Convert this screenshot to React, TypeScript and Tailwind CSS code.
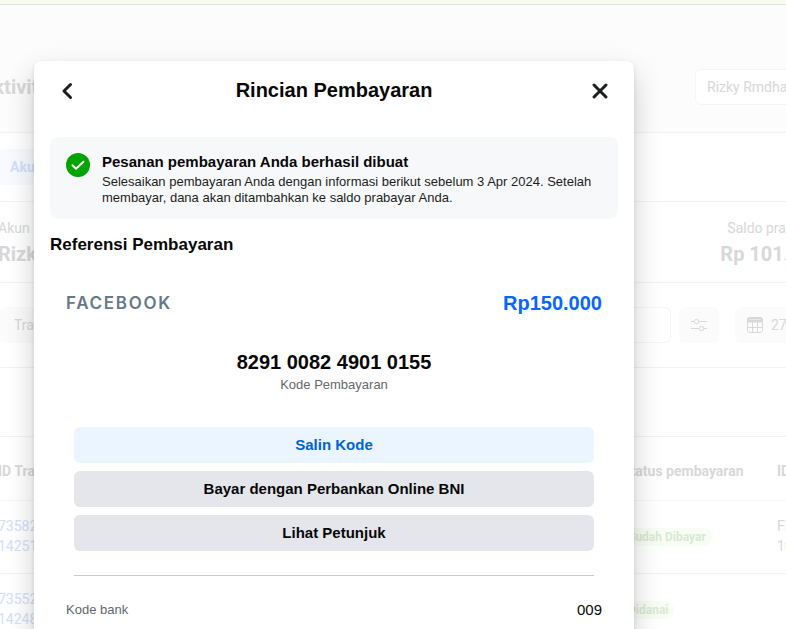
import React from 'react';

interface ActionButtonProps {
  label: string;
  primary?: boolean;
}

const ActionButton = ({ label, primary }: ActionButtonProps) => (
  <button
    type="button"
    className={
      primary
        ? 'h-9 w-full rounded-md bg-[#ebf5ff] text-[15px] font-bold text-[#0064d1]'
        : 'h-9 w-full rounded-md bg-[#e4e6eb] text-[15px] font-bold text-[#080809]'
    }
  >
    {label}
  </button>
);

const SlidersIcon = () => (
  <svg className="h-4 w-4" viewBox="0 0 16 16" fill="none" stroke="currentColor" strokeWidth="1">
    <path d="M0 4.5h3M8 4.5h8M0 11.5h8M13 11.5h3" />
    <circle cx="5.5" cy="4.5" r="2.2" />
    <circle cx="10.5" cy="11.5" r="2.2" />
  </svg>
);

const CalendarIcon = () => (
  <svg className="h-4 w-4 shrink-0" viewBox="0 0 16 16" fill="none" stroke="currentColor" strokeWidth="1">
    <rect x="0.5" y="0.5" width="15" height="15" rx="2.5" />
    <path d="M0.5 5V3A2.5 2.5 0 0 1 3 .5h10A2.5 2.5 0 0 1 15.5 3v2z" fill="currentColor" />
    <path d="M5.5 5v10.5M10.5 5v10.5M.5 10.5h15" />
    <path d="M2.5 2.5h11" stroke="#f5f5f5" strokeWidth="0.6" />
  </svg>
);

const transactions = [
  { id: '735820194', ref: '142516830', status: 'Sudah Dibayar', code: 'FB82', number: '10482' },
  { id: '735527731', ref: '142480952', status: 'Didanai', code: '', number: '' },
];

const BillingPage = () => (
  <div className="h-screen overflow-hidden bg-white font-[Roboto,sans-serif] text-sm text-[#d8d8d8]">
    <div className="h-[5px] border-b border-[#dfe3d6] bg-[#f8fbef]" />
    <div className="-mr-13 -ml-6">
      <header className="flex h-32 items-center justify-between border-b border-[#f3f3f3] bg-[#fcfcfc] pt-9 pr-4 pl-1">
        <h1 className="text-xl font-bold">Aktivitas</h1>
        <select aria-label="Akun iklan" className="h-9 w-[127px] appearance-none rounded-md border border-[#f4f4f4] bg-white px-[11px]">
          <option>Rizky Rmdhan</option>
        </select>
      </header>
      <nav className="flex h-[69px] items-center border-b border-[#f3f3f3] pl-[22px]">
        <a href="#akun" className="flex h-9 items-center rounded-md bg-[#f8faff] px-3 font-bold text-[#d0e0fc]">
          Akun
        </a>
      </nav>
      <section className="flex h-[81px] items-center justify-between border-b border-[#f3f3f3] pr-[14px] pl-[22px]">
        <div>
          <p className="leading-6">Akun</p>
          <p className="text-xl font-bold leading-7">Rizky</p>
        </div>
        <div>
          <p className="pl-[7px] leading-6">Saldo prabayar</p>
          <p className="text-xl font-bold leading-7">Rp 101.000</p>
        </div>
      </section>
      <section className="flex h-[85px] items-center gap-2 border-b border-[#f3f3f3] pl-6">
        <select aria-label="Jenis" className="h-9 w-28 appearance-none rounded-md bg-[#fbfbfb] px-3.5">
          <option>Transaksi</option>
        </select>
        <input aria-label="Cari" className="h-9 min-w-0 flex-1 rounded-md border border-[#f4f4f4]" />
        <button type="button" aria-label="Filter" className="mr-2 flex h-9 w-10 items-center justify-center rounded-md bg-[#fbfbfb]">
          <SlidersIcon />
        </button>
        <button type="button" className="flex h-9 w-[103px] items-center gap-2 overflow-hidden rounded-md bg-[#fbfbfb] px-3 whitespace-nowrap">
          <CalendarIcon />
          27 Mar 2024
        </button>
      </section>
      <div className="h-[69px] border-b border-[#f3f3f3]" />
      <table className="w-full table-fixed text-left">
        <thead>
          <tr className="h-[63px] border-b border-[#f7f7f7] align-middle">
            <th className="pt-1.5 pl-[22px] font-bold">ID Transaksi</th>
            <th className="w-[155px] pt-1.5 font-bold">Status pembayaran</th>
            <th className="w-[61px] pt-1.5 font-bold">ID</th>
          </tr>
        </thead>
        <tbody>
          {transactions.map((item) => (
            <tr key={item.id} className="h-[73px] border-b border-[#f3f3f3]">
              <td className="pb-0.5 pl-[22px] leading-5 text-[#d3e0fa]">
                <a href="#transaksi">
                  {item.id}
                  <br />
                  {item.ref}
                </a>
              </td>
              <td className="pb-0.5">
                <span className="inline-block rounded-full bg-[#f8fdf4] px-1.5 text-xs leading-[18px] font-bold text-[#d9e8d5]">
                  {item.status}
                </span>
              </td>
              <td className="pb-0.5 leading-5">
                {item.code}
                <br />
                {item.number}
              </td>
            </tr>
          ))}
        </tbody>
      </table>
    </div>
  </div>
);

const PaymentDialog = () => (
  <div
    role="dialog"
    aria-labelledby="dialog-title"
    className="min-h-screen w-[600px] max-w-full rounded-lg bg-white px-4 font-['Liberation_Sans',Arial,sans-serif] text-[#080809] shadow-[0_12px_28px_rgba(0,0,0,0.2),0_2px_4px_rgba(0,0,0,0.1)]"
  >
    <header className="flex h-[60px] items-center justify-between px-2">
      <button type="button" aria-label="Kembali" className="flex h-5 w-5 items-center justify-center">
        <svg className="h-5 w-5" viewBox="0 0 20 20" fill="none" stroke="#1c1e21" strokeWidth="3" strokeLinecap="round" strokeLinejoin="round">
          <path d="M12.5 3.5L6 10l6.5 6.5" />
        </svg>
      </button>
      <h2 id="dialog-title" className="pb-0.5 text-xl font-bold">
        Rincian Pembayaran
      </h2>
      <button type="button" aria-label="Tutup" className="flex h-5 w-5 items-center justify-center">
        <svg className="h-5 w-5" viewBox="0 0 20 20" fill="none" stroke="#1c1e21" strokeWidth="3" strokeLinecap="round">
          <path d="M4 4l12 12M16 4L4 16" />
        </svg>
      </button>
    </header>

    <div className="mt-4 flex gap-3 rounded-lg bg-[#f7f8fa] px-4 pt-4 pb-[13px]">
      <svg className="h-6 w-6 shrink-0" viewBox="0 0 24 24" fill="none">
        <circle cx="12" cy="12" r="12" fill="#00a400" />
        <path d="M6.5 12.3l3.5 3.5 7.5-7" stroke="#fff" strokeWidth="2" strokeLinecap="round" strokeLinejoin="round" />
      </svg>
      <div>
        <h3 className="mb-[3px] text-[15px] leading-[18px] font-bold">Pesanan pembayaran Anda berhasil dibuat</h3>
        <p className="text-[13px] leading-4 text-[#1c1e21]">
          Selesaikan pembayaran Anda dengan informasi berikut sebelum 3 Apr 2024. Setelah membayar, dana akan ditambahkan ke saldo prabayar Anda.
        </p>
      </div>
    </div>

    <h3 className="mt-4 text-[17px] leading-5 font-bold">Referensi Pembayaran</h3>

    <div className="mt-8 flex items-center justify-between px-4">
      <span className="font-[Inter,sans-serif] text-[17px] leading-8 font-semibold tracking-widest text-[#67788a]">FACEBOOK</span>
      <span className="text-xl leading-8 font-bold text-[#0866ff]">Rp150.000</span>
    </div>

    <div className="mt-8 text-center">
      <p className="mb-0.5 text-xl leading-[22px] font-bold">8291 0082 4901 0155</p>
      <p className="text-[13px] leading-5 text-[#65686c]">Kode Pembayaran</p>
    </div>

    <div className="mx-6 mt-8 flex flex-col gap-2 border-b border-[#c9cbcf] pb-6">
      <ActionButton label="Salin Kode" primary />
      <ActionButton label="Bayar dengan Perbankan Online BNI" />
      <ActionButton label="Lihat Petunjuk" />
    </div>

    <dl className="mt-6 flex items-center justify-between px-4 leading-5">
      <dt className="text-[13px] text-[#65686c]">Kode bank</dt>
      <dd className="text-[15px]">009</dd>
    </dl>
  </div>
);

export default function App() {
  return (
    <div className="relative h-screen overflow-hidden">
      <BillingPage />
      <div className="absolute inset-0 overflow-hidden pt-[61px] pl-[34px]">
        <PaymentDialog />
      </div>
    </div>
  );
}
